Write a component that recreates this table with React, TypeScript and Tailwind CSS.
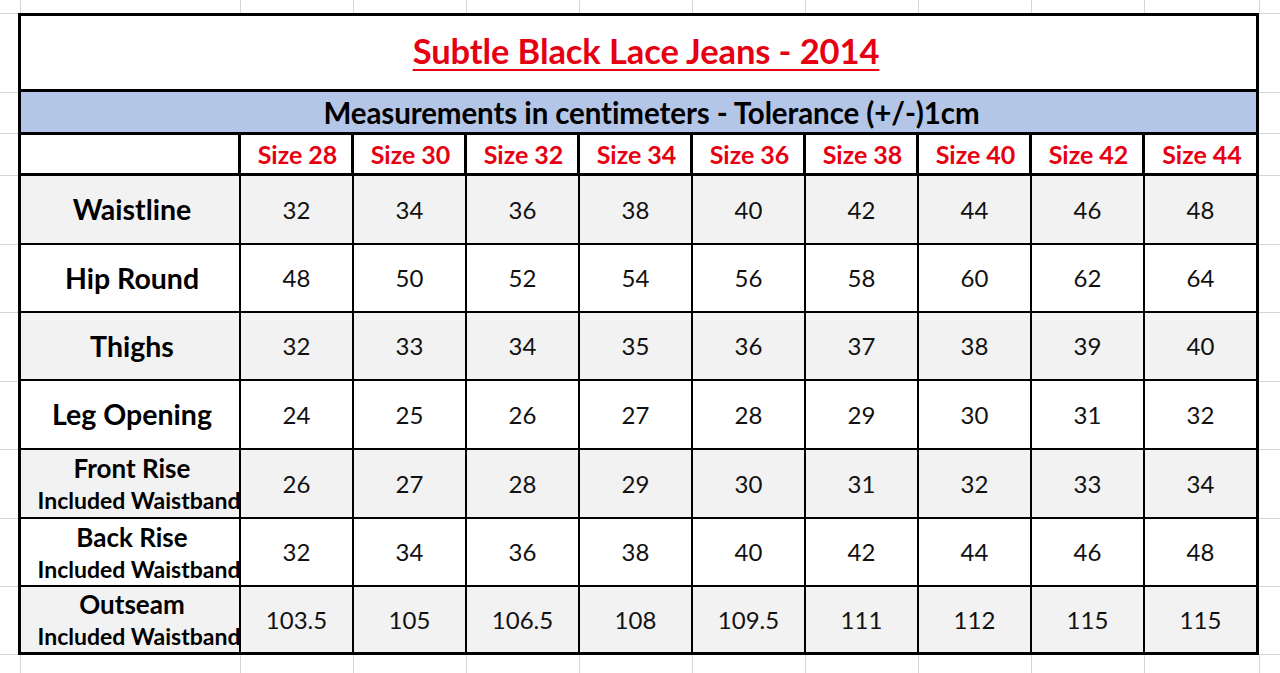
import React from "react";

const sizes = ["28", "30", "32", "34", "36", "38", "40", "42", "44"];

type Row = { label: string; sub?: boolean; values: string[]; gray: boolean; h: string };

const rows: Row[] = [
  { label: "Waistline", values: ["32", "34", "36", "38", "40", "42", "44", "46", "48"], gray: true, h: "h-[69px]" },
  { label: "Hip Round", values: ["48", "50", "52", "54", "56", "58", "60", "62", "64"], gray: false, h: "h-[68px]" },
  { label: "Thighs", values: ["32", "33", "34", "35", "36", "37", "38", "39", "40"], gray: true, h: "h-[68px]" },
  { label: "Leg Opening", values: ["24", "25", "26", "27", "28", "29", "30", "31", "32"], gray: false, h: "h-[69px]" },
  { label: "Front Rise", sub: true, values: ["26", "27", "28", "29", "30", "31", "32", "33", "34"], gray: true, h: "h-[69px]" },
  { label: "Back Rise", sub: true, values: ["32", "34", "36", "38", "40", "42", "44", "46", "48"], gray: false, h: "h-[68px]" },
  { label: "Outseam", sub: true, values: ["103.5", "105", "106.5", "108", "109.5", "111", "112", "115", "115"], gray: true, h: "h-[65px]" },
];

const stripHeights = [
  "h-[80px] border-t",
  "h-[41px]",
  "h-[42px]",
  "h-[69px]",
  "h-[68px]",
  "h-[69px]",
  "h-[68px]",
  "h-[69px]",
  "h-[68px]",
  "h-[68px]",
];

function SideStrip({ w }: { w: string }) {
  return (
    <div className={`${w} flex flex-col`}>
      {stripHeights.map((h, i) => (
        <div key={i} className={`${h} border-b border-[#d6d6d6] box-border`} />
      ))}
    </div>
  );
}

function VStrip({ h }: { h: string }) {
  const widths = [
    "w-[21px]",
    "w-[220px]",
    "w-[113px]",
    "w-[113px]",
    "w-[113px]",
    "w-[113px]",
    "w-[113px]",
    "w-[113px]",
    "w-[113px]",
    "w-[113px]",
    "w-[115px]",
  ];
  return (
    <div className={`${h} flex shrink-0`}>
      {widths.map((w, i) => (
        <div key={i} className={`${w} h-full border-r border-[#d6d6d6] box-border shrink-0`} />
      ))}
    </div>
  );
}

export default function App() {
  const font = { fontFamily: "Lato, 'Open Sans', sans-serif" };
  return (
    <div className="w-[1280px] h-[673px] bg-white overflow-hidden flex flex-col" style={font}>
      <VStrip h="h-[13px]" />
      <div className="flex h-[642px] shrink-0">
        <SideStrip w="w-[18px]" />
        <div className="w-[1241px] h-[642px] border-[3px] border-black box-border flex flex-col shrink-0">
          <div className="h-[76px] border-b-[3px] border-black flex items-center justify-center shrink-0">
            <span className="text-[34.5px] font-bold text-[#e60012] underline decoration-2 underline-offset-[5px] tracking-[-0.1px] pl-[15px] -mt-[3px]">
              Subtle Black Lace Jeans - 2014
            </span>
          </div>
          <div className="h-[43px] border-b-[3px] border-black bg-[#b4c6e7] flex items-center justify-center shrink-0">
            <span className="text-[29.5px] font-bold text-black leading-none pt-[2px] tracking-[-0.1px] pl-[26px]">
              Measurements in centimeters - Tolerance (+/-)1cm
            </span>
          </div>
          <div className="h-[41px] border-b-[3px] border-black grid grid-cols-[220px_repeat(8,113px)_1fr] shrink-0">
            <div className="border-r-[3px] border-black" />
            {sizes.map((s, i) => (
              <div
                key={s}
                className={`flex items-center justify-center text-[25px] font-bold text-[#e60012] leading-none pl-[3px] ${i < 8 ? "border-r-[3px] border-black" : ""}`}
              >
                Size {s}
              </div>
            ))}
          </div>
          {rows.map((r, ri) => (
            <div
              key={r.label}
              className={`${r.h} grid grid-cols-[220px_repeat(8,113px)_1fr] shrink-0 ${ri < rows.length - 1 ? "border-b-2 border-black" : ""} ${r.gray ? "bg-[#f2f2f2]" : "bg-white"}`}
            >
              <div className="border-r-2 border-black flex flex-col items-center justify-center text-black font-bold leading-none pl-1">
                {r.sub ? (
                  <>
                    <span className="text-[26px] pb-[8px]">{r.label}</span>
                    <span className="text-[23px] pl-[14px] whitespace-nowrap">Included Waistband</span>
                  </>
                ) : (
                  <span className="text-[28.5px]">{r.label}</span>
                )}
              </div>
              {r.values.map((v, i) => (
                <div
                  key={i}
                  className={`flex items-center justify-center text-[24px] text-[#111] leading-none ${i < 8 ? "border-r-2 border-black" : ""}`}
                >
                  {v}
                </div>
              ))}
            </div>
          ))}
        </div>
        <SideStrip w="flex-1" />
      </div>
      <VStrip h="h-[18px]" />
    </div>
  );
}
